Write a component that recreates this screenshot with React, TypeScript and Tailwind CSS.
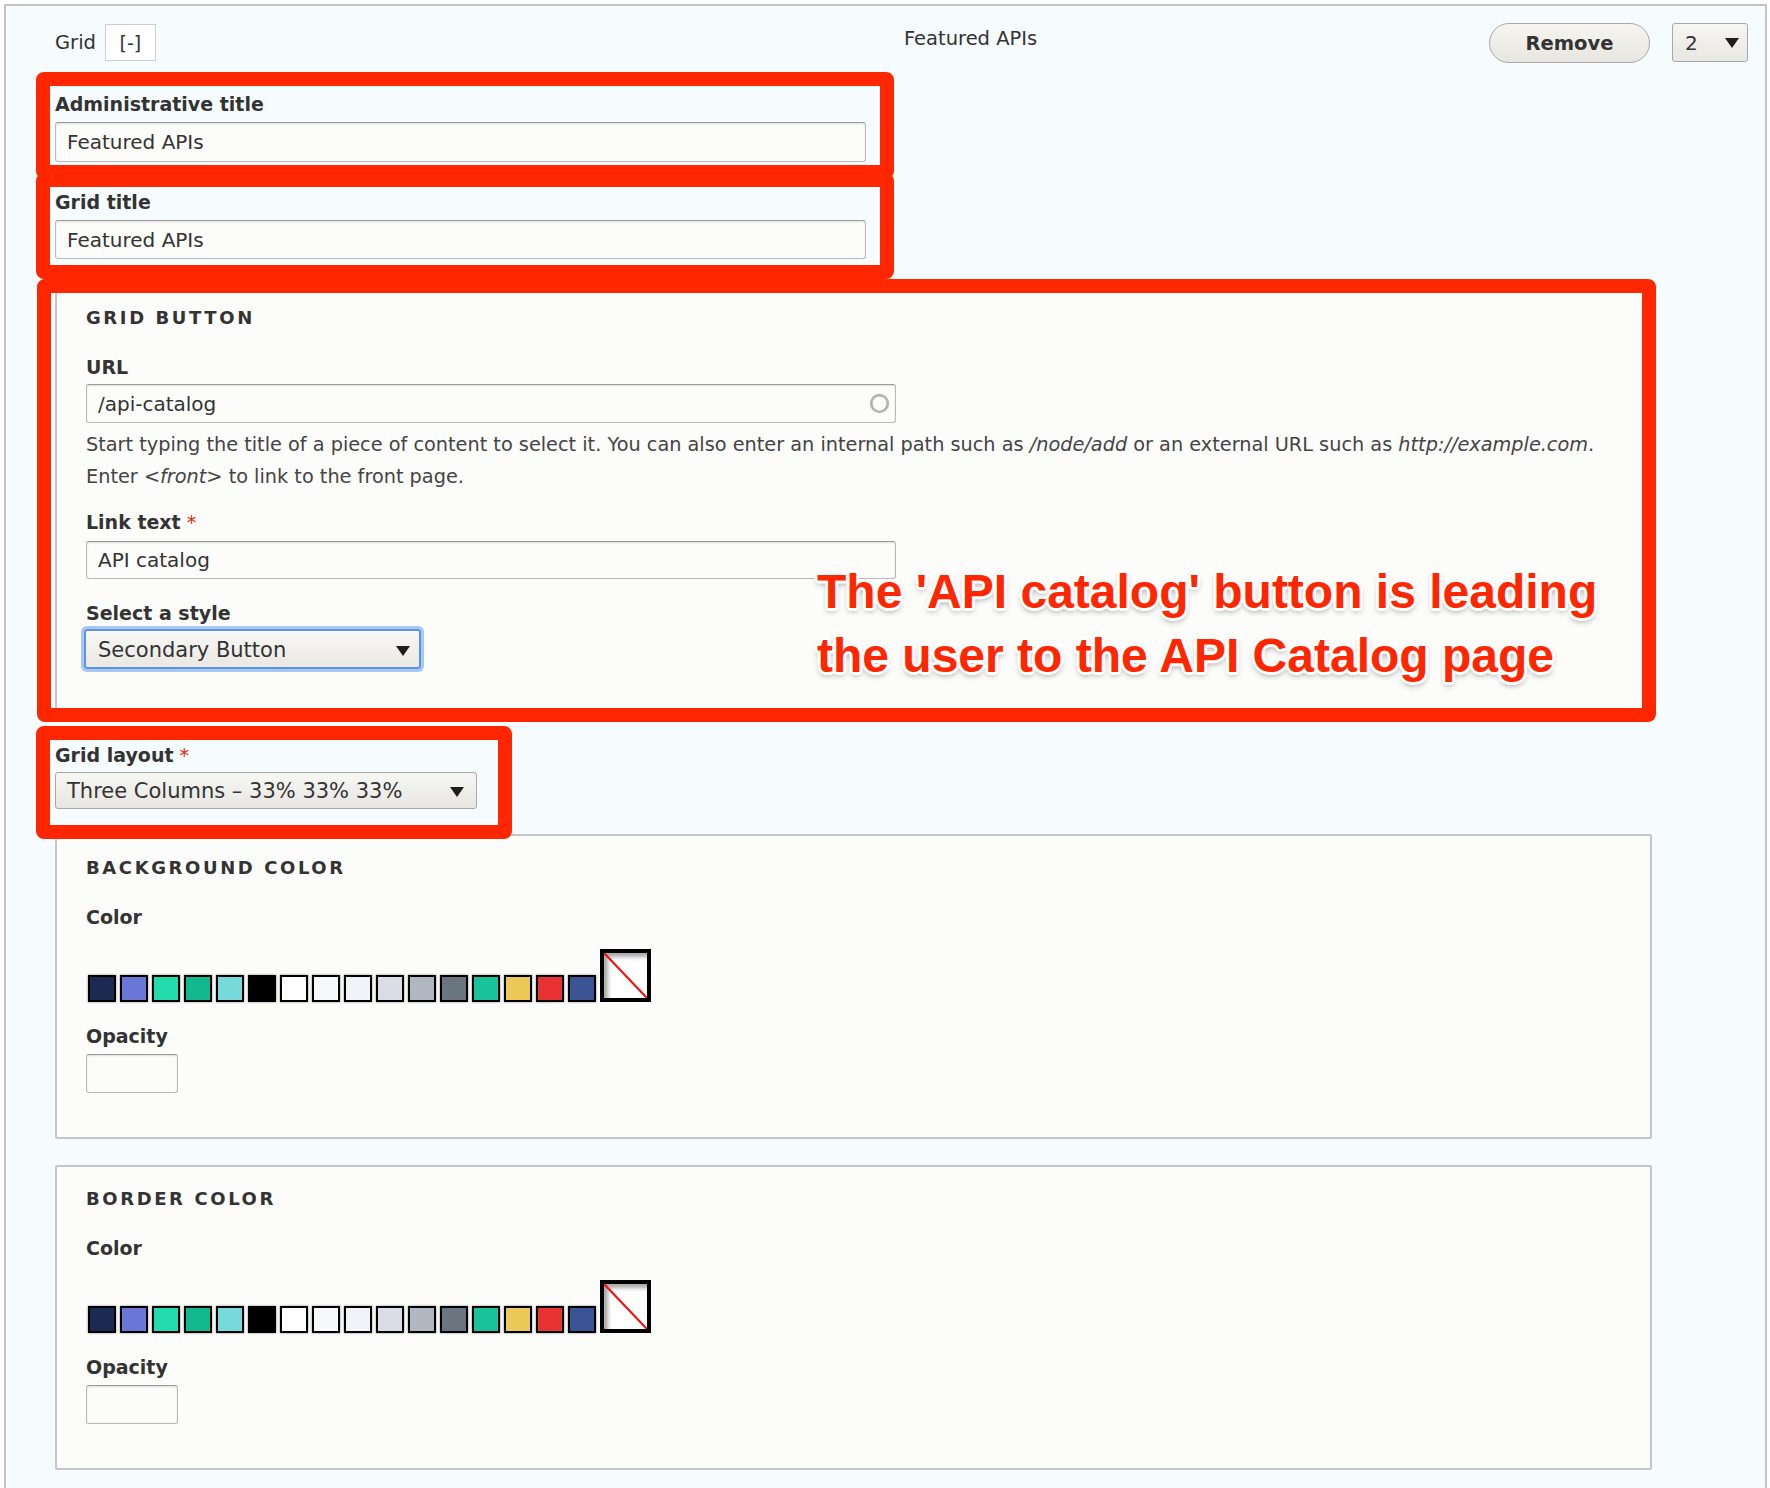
import React from "react";

const swatches = [
  "bg-[#1a2a50]",
  "bg-[#6b77d6]",
  "bg-[#22dcae]",
  "bg-[#12b98e]",
  "bg-[#77d9da]",
  "bg-black",
  "bg-white",
  "bg-[#f8f9fc]",
  "bg-[#f2f3f8]",
  "bg-[#dadde5]",
  "bg-[#b0b7c1]",
  "bg-[#6b7580]",
  "bg-[#19c49a]",
  "bg-[#ecc956]",
  "bg-[#e93333]",
  "bg-[#3b5496]",
];

function Arrow() {
  return (
    <svg width="14" height="10" viewBox="0 0 14 10" className="shrink-0">
      <path d="M0 0 H14 L7 10 Z" fill="#1e1e1e" />
    </svg>
  );
}

function Label({ children, required }: { children: React.ReactNode; required?: boolean }) {
  return (
    <div className="text-[19px] font-bold leading-[24px] text-[#333]">
      {children}
      {required && <span className="ml-[6px] font-normal text-[#e62600]">*</span>}
    </div>
  );
}

function TextBox({ value, className }: { value: string; className: string }) {
  return (
    <input
      readOnly
      value={value}
      className={
        "block rounded-[3px] border border-[#b9b9b9] border-t-[#9a9a9a] bg-[#fcfcfa] px-[11px] text-[20px] text-[#333] shadow-[inset_0_1px_2px_rgba(0,0,0,0.12)] outline-none " +
        className
      }
    />
  );
}

function Legend({ children }: { children: React.ReactNode }) {
  return (
    <div className="text-[18px] font-bold uppercase leading-[24px] tracking-[2.6px] text-[#333]">
      {children}
    </div>
  );
}

function ColorFieldset({ title, className }: { title: string; className: string }) {
  return (
    <div
      className={
        "w-[1597px] rounded-[2px] border-2 border-[#c6c6c6] bg-[#fcfcfa] pb-[44px] pl-[29px] pt-[20px] " +
        className
      }
    >
      <Legend>{title}</Legend>
      <div className="mt-[25px]">
        <Label>Color</Label>
      </div>
      <div className="ml-[2px] mt-[20px] flex items-end gap-[4px]">
        {swatches.map((c, i) => (
          <div
            key={i}
            className={"h-[27px] w-[28px] border-2 border-black shadow-[0_0_2px_rgba(0,0,0,0.5)] " + c}
          />
        ))}
        <div className="relative h-[53px] w-[51px] border-4 border-black bg-white shadow-[inset_4px_4px_4px_rgba(0,0,0,0.35)]">
          <svg className="absolute inset-0" width="43" height="45" viewBox="0 0 43 45">
            <line x1="0" y1="0" x2="43" y2="45" stroke="#f01010" strokeWidth="2.2" />
          </svg>
        </div>
      </div>
      <div className="mt-[22px]">
        <Label>Opacity</Label>
      </div>
      <TextBox value="" className="mt-[6px] h-[39px] w-[92px]" />
    </div>
  );
}

function RedBox({ className }: { className: string }) {
  return (
    <div
      className={
        "pointer-events-none absolute rounded-[8px] border-[14px] border-[#ff2600] " + className
      }
    />
  );
}

export default function App() {
  return (
    <div className="min-h-[1488px] bg-white pl-[4px] pt-[4px] font-['DejaVu_Sans',sans-serif] text-[#333]">
      <div className="relative min-h-[1484px] w-[1763px] border-l-2 border-r-2 border-t-2 border-[#c4c4c4] bg-[#f6fbfe] pt-[16px]">
        {/* Header row */}
        <div className="flex h-[41px] items-center pl-[49px] pr-[17px]">
          <span className="text-[19.5px] leading-[24px]">Grid</span>
          <button className="ml-[9px] h-[37px] w-[51px] border border-[#cfcfcf] bg-white text-[19px] leading-[24px] text-[#333]">
            [-]
          </button>
          <span className="ml-[748px] mb-[8px] text-[19.5px] leading-[24px]">Featured APIs</span>
          <div className="flex-1" />
          <button className="h-[40px] w-[161px] rounded-full border border-[#a8a8a8] bg-linear-to-b from-[#f6f5f0] to-[#e7e6e0] pt-[3px] text-[19.5px] font-bold text-[#333]">
            Remove
          </button>
          <div className="ml-[22px] flex h-[39px] w-[76px] items-center justify-between rounded-[3px] border border-[#a8a8a8] bg-linear-to-b from-[#f6f6f3] to-[#e8e7e2] pl-[12px] pr-[8px] text-[20px]">
            <span>2</span>
            <Arrow />
          </div>
        </div>

        {/* Body */}
        <div className="pl-[49px]">
          <div className="mt-[29px]">
            <Label>Administrative title</Label>
          </div>
          <TextBox value="Featured APIs" className="mt-[6px] h-[40px] w-[811px]" />

          <div className="mt-[28px]">
            <Label>Grid title</Label>
          </div>
          <TextBox value="Featured APIs" className="mt-[6px] h-[39px] w-[811px]" />

          {/* Grid button fieldset */}
          <div className="mt-[25px] w-[1597px] rounded-[2px] border-2 border-[#c6c6c6] bg-[#fcfcfa] pb-[41px] pl-[29px] pt-[20px]">
            <Legend>Grid button</Legend>
            <div className="mt-[25px]">
              <Label>URL</Label>
            </div>
            <div className="relative mt-[5px] w-[810px]">
              <TextBox value="/api-catalog" className="h-[39px] w-[810px]" />
              <svg
                className="absolute right-[6px] top-[9px]"
                width="21"
                height="21"
                viewBox="0 0 21 21"
              >
                <circle cx="10.5" cy="10.5" r="8.3" fill="none" stroke="#b4b4b4" strokeWidth="2.8" />
              </svg>
            </div>
            <div className="mt-[6px] text-[19.3px] leading-[32px] text-[#444]">
              <div className="whitespace-nowrap">
                Start typing the title of a piece of content to select it. You can also enter an
                internal path such as <em>/node/add</em> or an external URL such as{" "}
                <em>http://example.com</em>.
              </div>
              <div className="whitespace-nowrap">
                Enter <em>&lt;front&gt;</em> to link to the front page.
              </div>
            </div>
            <div className="mt-[17px]">
              <Label required>Link text</Label>
            </div>
            <TextBox value="API catalog" className="mt-[7px] h-[38px] w-[810px]" />
            <div className="mt-[22px]">
              <Label>Select a style</Label>
            </div>
            <div className="ml-[-2px] mt-[4px] flex h-[40px] w-[337px] items-center justify-between rounded-[3px] border-2 border-[#5d93e6] bg-linear-to-b from-[#f8f8f5] to-[#e9e8e3] pl-[12px] pr-[9px] pt-[3px] text-[21px] shadow-[0_0_0_3px_#a8c7f4]">
              <span>Secondary Button</span>
              <Arrow />
            </div>
          </div>

          <div className="mt-[31px]">
            <Label required>Grid layout</Label>
          </div>
          <div className="mt-[5px] flex h-[37px] w-[422px] items-center justify-between rounded-[3px] border border-[#a8a8a8] bg-linear-to-b from-[#f7f7f4] to-[#e7e6e1] pl-[11px] pr-[12px] pt-[2px] text-[21px]">
            <span>Three Columns – 33% 33% 33%</span>
            <Arrow />
          </div>

          <ColorFieldset title="Background color" className="mt-[25px]" />
          <ColorFieldset title="Border color" className="mt-[26px]" />
        </div>

        {/* Annotations */}
        <RedBox className="left-[30px] top-[66px] h-[107px] w-[858px]" />
        <RedBox className="left-[30px] top-[167px] h-[106px] w-[858px]" />
        <RedBox className="left-[31px] top-[273px] h-[443px] w-[1619px]" />
        <RedBox className="left-[30px] top-[720px] h-[113px] w-[476px]" />

        <div className="pointer-events-none absolute left-[811px] top-[554px] font-['Liberation_Sans',Arial,sans-serif] text-[48px] font-bold leading-[64px] text-[#ff2600] [text-shadow:3px_0_0_#fff,-3px_0_0_#fff,0_3px_0_#fff,0_-3px_0_#fff,2px_2px_0_#fff,-2px_-2px_0_#fff,2px_-2px_0_#fff,-2px_2px_0_#fff,0_3px_6px_rgba(0,0,0,0.45)]">
          <div>The 'API catalog' button is leading</div>
          <div>the user to the API Catalog page</div>
        </div>
      </div>
    </div>
  );
}
